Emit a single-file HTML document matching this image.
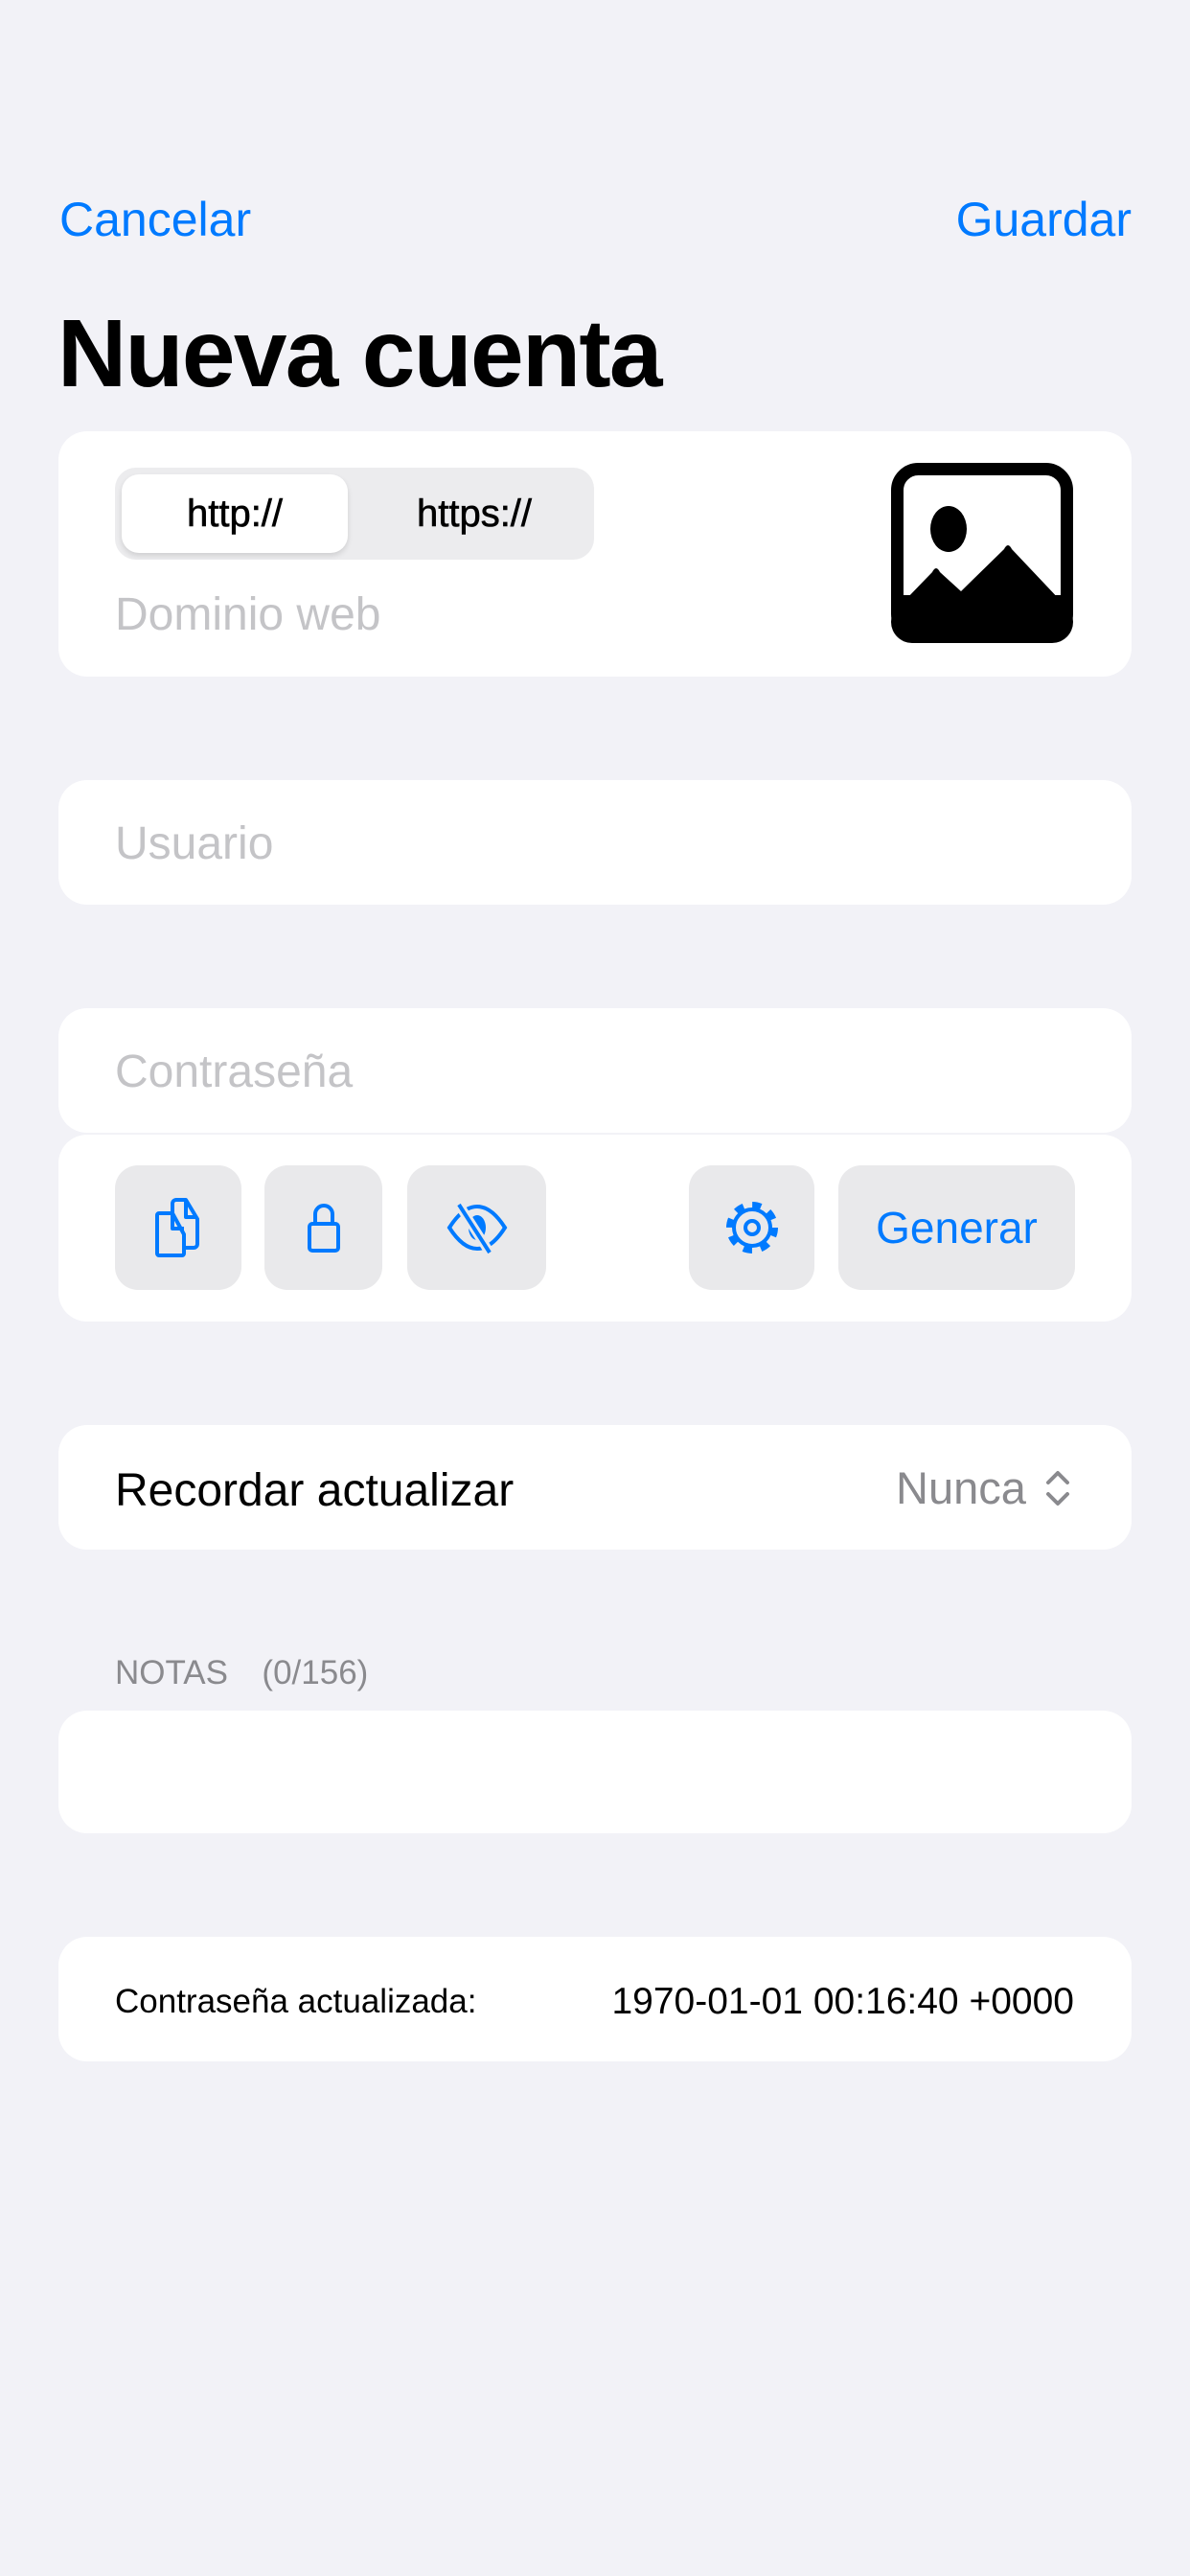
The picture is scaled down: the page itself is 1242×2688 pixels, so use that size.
<!DOCTYPE html>
<html><head><meta charset="utf-8"><style>
*{margin:0;padding:0;box-sizing:border-box}
body{width:1242px;height:2688px;background:#f2f2f7;font-family:"Liberation Sans",sans-serif;position:relative;overflow:hidden}
.a{position:absolute}
.card{position:absolute;left:61px;width:1120px;background:#fff;border-radius:30px}
.blue{color:#007aff}
.ph{color:#c4c4c7;font-size:48px}
.btn{position:absolute;top:1216px;height:130px;background:#e9e9eb;border-radius:24px;display:flex;align-items:center;justify-content:center}
</style></head><body>
<div class="a blue" style="left:62px;top:200px;font-size:50px">Cancelar</div>
<div class="a blue" style="right:61px;top:200px;font-size:50px">Guardar</div>
<div class="a" style="left:60px;top:312px;font-size:100px;font-weight:bold;letter-spacing:-1.7px">Nueva cuenta</div>

<div class="card" style="top:450px;height:256px"></div>
<div class="a" style="left:120px;top:488px;width:500px;height:96px;background:#ececee;border-radius:22px"></div>
<div class="a" style="left:127px;top:495px;width:236px;height:82px;background:#fff;border-radius:18px;box-shadow:0 3px 6px rgba(0,0,0,.12)"></div>
<div class="a" style="left:127px;top:514px;width:236px;text-align:center;font-size:40px;-webkit-text-stroke:0.6px #000">http://</div>
<div class="a" style="left:370px;top:514px;width:250px;text-align:center;font-size:40px;-webkit-text-stroke:0.6px #000">https://</div>
<div class="a ph" style="left:120px;top:614px">Dominio web</div>
<svg class="a" style="left:930px;top:481px" width="190" height="190" viewBox="0 0 190 190">
<rect x="6.5" y="8.5" width="177" height="173" rx="22" fill="none" stroke="#000" stroke-width="13"/>
<rect x="0" y="146" width="190" height="44" rx="22" fill="#000"/>
<rect x="0" y="140" width="190" height="20" fill="#000"/>
<path d="M13 147 L43 116 Q47 108 51 116 L73 136 L118 92 Q122 84 126 92 L178 147Z" fill="#000"/>
<ellipse cx="60" cy="71" rx="19" ry="24" fill="#000"/>
</svg>

<div class="card" style="top:814px;height:130px"></div>
<div class="a ph" style="left:120px;top:853px">Usuario</div>

<div class="card" style="top:1052px;height:130px"></div>
<div class="a ph" style="left:120px;top:1091px">Contraseña</div>
<div class="card" style="top:1184px;height:195px"></div>
<div class="btn" style="left:120px;width:132px"><svg width="56" height="66" viewBox="0 0 56 66" fill="none" stroke="#007aff" stroke-width="4" stroke-linejoin="round"><path d="M22 18V8a4 4 0 0 1 4-4h10l12 20v26a4 4 0 0 1-4 4h-10"/><path d="M36 4v18h12"/><path d="M8 18h14l12 22v20a2 2 0 0 1-2 2H8a2 2 0 0 1-2-2V20a2 2 0 0 1 2-2z"/><path d="M22 18v16h12"/></svg></div>
<div class="btn" style="left:276px;width:123px"><svg width="36" height="56" viewBox="0 0 36 56" fill="none" stroke="#007aff" stroke-width="4"><path d="M9 24V14a9 9 0 0 1 18 0v10"/><rect x="3" y="24" width="30" height="28" rx="3"/></svg></div>
<div class="btn" style="left:425px;width:145px"><svg width="66" height="56" viewBox="0 0 66 56" fill="none" stroke="#007aff" stroke-width="4"><path d="M4 28Q18 6 33 6T62 28Q48 50 33 50T4 28Z"/><ellipse cx="33" cy="28" rx="9" ry="13" fill="#007aff" stroke="none"/><path d="M14 4L46 54" stroke="#e9e9eb" stroke-width="10"/><path d="M14 4L46 54"/></svg></div>
<div class="btn" style="left:719px;width:131px"><svg width="60" height="60" viewBox="0 0 60 60" fill="none" stroke="#007aff"><circle cx="30" cy="30" r="23" stroke-width="8" stroke-dasharray="9 9.06"/><circle cx="30" cy="30" r="19" stroke-width="4" fill="#e9e9eb"/><circle cx="30" cy="30" r="7" stroke-width="4"/></svg></div>
<div class="btn blue" style="left:875px;width:247px;font-size:46px">Generar</div>

<div class="card" style="top:1487px;height:130px"></div>
<div class="a" style="left:120px;top:1528px;font-size:48px">Recordar actualizar</div>
<div class="a" style="left:935px;top:1525px;font-size:47px;color:#8a8a8e">Nunca</div>
<svg class="a" style="left:1090px;top:1532px" width="28" height="42" viewBox="0 0 28 42" fill="none" stroke="#8a8a8e" stroke-width="4" stroke-linecap="round" stroke-linejoin="round"><path d="M4 15L14 5 24 15M4 27L14 37 24 27"/></svg>

<div class="a" style="left:120px;top:1726px;font-size:35px;color:#8a8a8e;word-spacing:8px">NOTAS &nbsp;(0/156)</div>
<div class="card" style="top:1785px;height:128px"></div>

<div class="card" style="top:2021px;height:130px"></div>
<div class="a" style="left:120px;top:2069px;font-size:35px">Contraseña actualizada:</div>
<div class="a" style="right:121px;top:2067px;font-size:39px">1970-01-01 00:16:40 +0000</div>
</body></html>
